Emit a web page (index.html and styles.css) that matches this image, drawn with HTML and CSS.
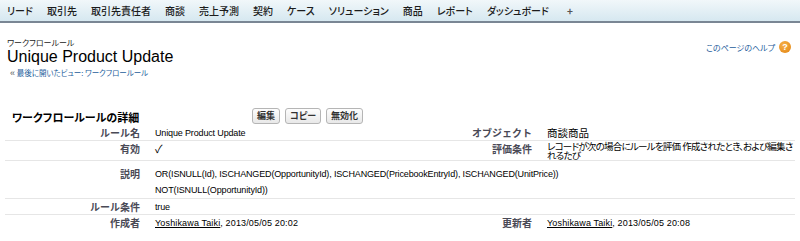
FILE: index.html
```html
<!DOCTYPE html>
<html lang="ja">
<head>
<meta charset="utf-8">
<link rel="stylesheet" href="styles.css">
</head>
<body>
<nav class="tabs">
  <span class="tab">リード</span>
  <span class="tab">取引先</span>
  <span class="tab">取引先責任者</span>
  <span class="tab">商談</span>
  <span class="tab">売上予測</span>
  <span class="tab">契約</span>
  <span class="tab">ケース</span>
  <span class="tab">ソリューション</span>
  <span class="tab">商品</span>
  <span class="tab">レポート</span>
  <span class="tab">ダッシュボード</span>
  <span class="tab plus">+</span>
</nav>
<header class="page-head">
  <div class="titles">
    <div class="type">ワークフロールール</div>
    <h1 class="name">Unique Product Update</h1>
    <div class="crumb"><span class="raquo">«</span> <a>最後に開いたビュー: ワークフロールール</a></div>
  </div>
  <a class="help">このページのヘルプ <span class="help-icon">?</span></a>
</header>
<section class="detail">
  <div class="detail-head">
    <h2 class="detail-title">ワークフロールールの詳細</h2>
    <div class="buttons">
      <button class="btn">編集</button>
      <button class="btn">コピー</button>
      <button class="btn">無効化</button>
    </div>
  </div>
  <div class="row">
    <div class="lbl">ルール名</div><div class="val">Unique Product Update</div>
    <div class="lbl">オブジェクト</div><div class="val cjk">商談商品</div>
  </div>
  <div class="row">
    <div class="lbl">有効</div><div class="val check">✓</div>
    <div class="lbl">評価条件</div><div class="val tight">レコードが次の場合にルールを評価 作成されたとき、および編集されるたび</div>
  </div>
  <div class="row desc">
    <div class="lbl">説明</div>
    <div class="val wide">
      <div>OR(ISNULL(Id), ISCHANGED(OpportunityId), ISCHANGED(PricebookEntryId), ISCHANGED(UnitPrice))</div>
      <div class="second">NOT(ISNULL(OpportunityId))</div>
    </div>
  </div>
  <div class="row">
    <div class="lbl">ルール条件</div><div class="val wide">true</div>
  </div>
  <div class="row last">
    <div class="lbl">作成者</div><div class="val meta"><a class="user">Yoshikawa Taiki</a>, 2013/05/05 20:02</div>
    <div class="lbl">更新者</div><div class="val meta"><a class="user">Yoshikawa Taiki</a>, 2013/05/05 20:08</div>
  </div>
</section>
</body>
</html>
```
FILE: styles.css
```css
* { box-sizing: border-box; }
html, body { margin: 0; padding: 0; background: #fff; }
body {
  font-family: "Liberation Sans", "Noto Sans CJK JP", sans-serif;
  font-feature-settings: "palt";
  color: #222;
  font-size: 10px;
  width: 800px;
  height: 241px;
  overflow: hidden;
}
.tabs {
  display: flex;
  align-items: center;
  height: 23px;
  background: linear-gradient(#f1f7fa, #d6e8f0);
  border-bottom: 2px solid #7a8694;
}
.tab {
  font-family: "Noto Sans CJK JP", sans-serif;
  font-size: 10px;
  font-weight: 500;
  color: #1b1b1b;
  padding: 0 7px 0 7px;
  line-height: 21px;
}
.tab.plus { margin-left: 4px; font-weight: 700; color: #555; }
.page-head {
  display: flex;
  justify-content: space-between;
  padding: 14px 9px 0 7px;
}
.type {
  font-family: "Noto Sans CJK JP", sans-serif;
  font-size: 8px;
  line-height: 11px;
  color: #222;
}
.name {
  margin: 0;
  font-weight: normal;
  font-size: 16px;
  line-height: 18px;
  color: #000;
}
.crumb {
  font-family: "Noto Sans CJK JP", sans-serif;
  font-size: 7.5px;
  line-height: 14px;
  color: #555;
  padding-left: 3px;
}
.raquo { font-family: "Liberation Sans", sans-serif; font-size: 9px; }
.crumb a, .help { color: #1d5d9b; text-decoration: none; }
.help {
  font-family: "Noto Sans CJK JP", sans-serif;
  font-size: 8px;
  display: flex;
  align-items: center;
  gap: 4px;
  height: 14px;
  margin-top: 3px;
}
.help-icon {
  display: inline-flex;
  width: 12px; height: 12px;
  border-radius: 50%;
  background: radial-gradient(circle at 40% 35%, #f7b24a, #e1820f);
  color: #fff;
  font-size: 9px;
  font-weight: bold;
  align-items: center;
  justify-content: center;
  font-family: "Liberation Sans", sans-serif;
}
.detail { padding: 0 5px; margin-top: 26px; }
.detail-head {
  display: flex;
  align-items: center;
  height: 19px;
}
.detail-title {
  margin: 0;
  font-family: "Noto Sans CJK JP", sans-serif;
  font-size: 11px;
  font-weight: 700;
  color: #000;
  width: 247px;
  padding-left: 7px;
  padding-top: 3px;
}
.buttons { display: flex; gap: 5px; }
.btn {
  font-family: "Noto Sans CJK JP", sans-serif;
  font-feature-settings: "palt";
  font-size: 9px;
  font-weight: 700;
  color: #333;
  background: linear-gradient(#fdfdfd, #e8e8e8);
  border: 1px solid #b5b5b5;
  border-radius: 3px;
  padding: 0 4px;
  height: 16px;
  line-height: 14px;
}
.row {
  display: grid;
  grid-template-columns: 150px 292px 100px 1fr;
  border-bottom: 1px solid #e6e6e6;
}
.row.last { border-bottom: none; }
.lbl {
  font-family: "Noto Sans CJK JP", sans-serif;
  font-feature-settings: normal;
  font-size: 10px;
  font-weight: 700;
  color: #4a4a56;
  text-align: right;
  padding: 3px 15px 2px 0;
  line-height: 10px;
}
.val {
  font-size: 9px;
  letter-spacing: -0.15px;
  line-height: 10px;
  padding: 3px 0 2px;
  color: #000;
}
.val.cjk { font-size: 10.5px; letter-spacing: 0; }
.val.meta { letter-spacing: 0.15px; }
.val.tight {
  font-size: 9.5px;
  letter-spacing: -0.75px;
  line-height: 9px;
  padding: 1px 0 0;
}
.row.desc .lbl { padding-top: 8px; }
.row.desc .val { padding: 8px 0 3px; }
.val .second { margin-top: 6px; }
.val.wide { grid-column: 2 / 5; }
.check { font-size: 11px; letter-spacing: 0; }
.user { color: #000; text-decoration: underline; }
```
